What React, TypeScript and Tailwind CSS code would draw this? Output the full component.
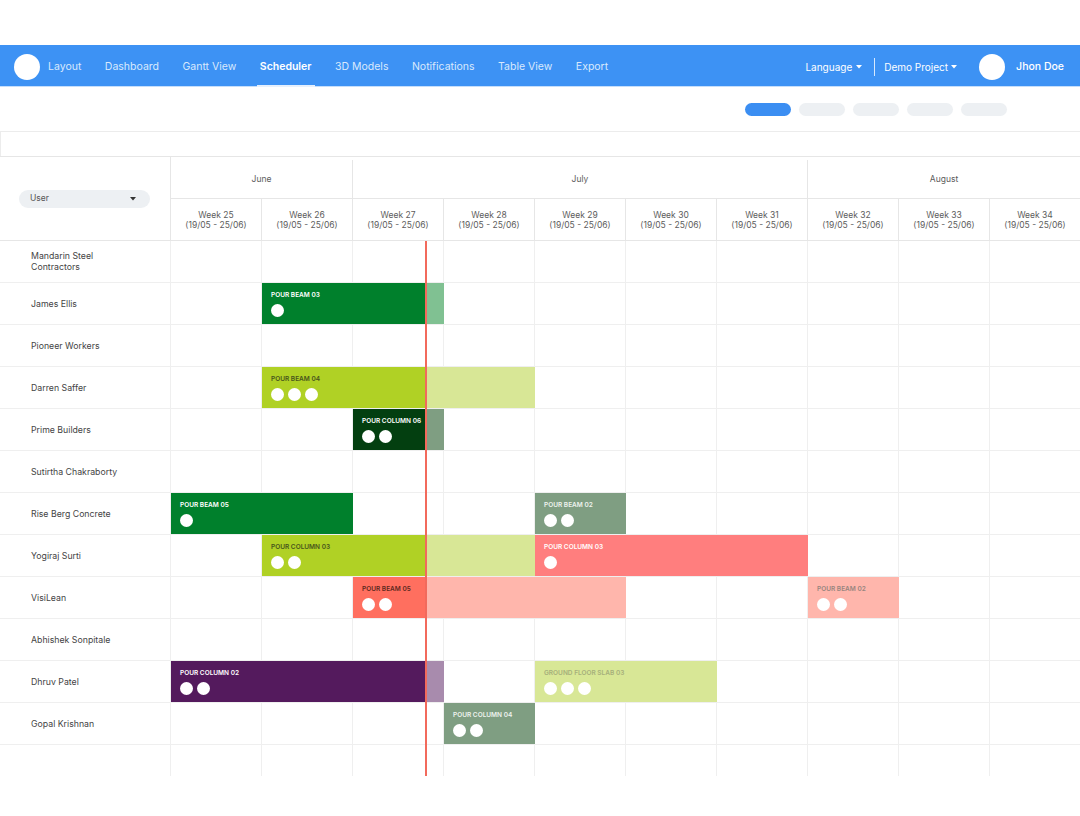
import React from "react";

const WEEK = 91;
const TODAY = 2.8;

type Seg = {
  s: number;
  e: number;
  bg: string;
  label?: string;
  fg?: string;
  dots?: number;
};

type Row = { name: string; segs: Seg[] };

const LIME = "bg-[#b0d125]";
const LIME_LIGHT = "bg-[#d8e796]";
const GREEN = "bg-[#00802c]";
const SAGE = "bg-[#7f9e82]";
const PINK_LIGHT = "bg-[#ffb6ac]";

const rows: Row[] = [
  { name: "Mandarin Steel\nContractors", segs: [] },
  {
    name: "James Ellis",
    segs: [
      { s: 1, e: TODAY, bg: GREEN, label: "POUR BEAM 03", fg: "text-white", dots: 1 },
      { s: TODAY, e: 3, bg: "bg-[#80c192]" },
    ],
  },
  { name: "Pioneer Workers", segs: [] },
  {
    name: "Darren Saffer",
    segs: [
      { s: 1, e: TODAY, bg: LIME, label: "POUR BEAM 04", fg: "text-[#48551c]", dots: 3 },
      { s: TODAY, e: 4, bg: LIME_LIGHT },
    ],
  },
  {
    name: "Prime Builders",
    segs: [
      { s: 2, e: TODAY, bg: "bg-[#033f10]", label: "POUR COLUMN 06", fg: "text-white", dots: 2 },
      { s: TODAY, e: 3, bg: SAGE },
    ],
  },
  { name: "Sutirtha Chakraborty", segs: [] },
  {
    name: "Rise Berg Concrete",
    segs: [
      { s: 0, e: 2, bg: GREEN, label: "POUR BEAM 05", fg: "text-white", dots: 1 },
      { s: 4, e: 5, bg: SAGE, label: "POUR BEAM 02", fg: "text-[#eef3ee]", dots: 2 },
    ],
  },
  {
    name: "Yogiraj Surti",
    segs: [
      { s: 1, e: TODAY, bg: LIME, label: "POUR COLUMN 03", fg: "text-[#48551c]", dots: 2 },
      { s: TODAY, e: 4, bg: LIME_LIGHT },
      { s: 4, e: 7, bg: "bg-[#ff7e7e]", label: "POUR COLUMN 03", fg: "text-white", dots: 1 },
    ],
  },
  {
    name: "VisiLean",
    segs: [
      { s: 2, e: TODAY, bg: "bg-[#ff6f5f]", label: "POUR BEAM 05", fg: "text-[#5e2820]", dots: 2 },
      { s: TODAY, e: 5, bg: PINK_LIGHT },
      { s: 7, e: 8, bg: PINK_LIGHT, label: "POUR BEAM 02", fg: "text-[#98857f]", dots: 2 },
    ],
  },
  { name: "Abhishek Sonpitale", segs: [] },
  {
    name: "Dhruv Patel",
    segs: [
      { s: 0, e: TODAY, bg: "bg-[#541a5d]", label: "POUR COLUMN 02", fg: "text-white", dots: 2 },
      { s: TODAY, e: 3, bg: "bg-[#a88bad]" },
      { s: 4, e: 6, bg: LIME_LIGHT, label: "GROUND FLOOR SLAB 03", fg: "text-[#a6af7b]", dots: 3 },
    ],
  },
  {
    name: "Gopal Krishnan",
    segs: [{ s: 3, e: 4, bg: SAGE, label: "POUR COLUMN 04", fg: "text-[#eef3ee]", dots: 2 }],
  },
];

const weeks = [25, 26, 27, 28, 29, 30, 31, 32, 33, 34];
const navItems = ["Layout", "Dashboard", "Gantt View", "Scheduler", "3D Models", "Notifications", "Table View", "Export"];

function Caret({ className = "" }: { className?: string }) {
  return (
    <svg width="6" height="4" viewBox="0 0 6 4" className={className}>
      <path d="M0 0h6L3 3.5z" fill="currentColor" />
    </svg>
  );
}

function WeekCells() {
  return (
    <>
      {weeks.map((w, i) => (
        <div
          key={w}
          className={`h-full shrink-0 ${i === weeks.length - 1 ? "flex-1" : "w-[91px] border-r border-[#efefef]"}`}
        />
      ))}
    </>
  );
}

function Bar({ seg }: { seg: Seg }) {
  return (
    <div
      className={`absolute top-0 bottom-0 overflow-hidden ${seg.bg}`}
      style={{ left: seg.s * WEEK, width: (seg.e - seg.s) * WEEK }}
    >
      {seg.label && (
        <div className="pl-[9px] pt-[8px]">
          <div className={`whitespace-nowrap text-[6.5px] font-semibold leading-[8px] ${seg.fg}`}>{seg.label}</div>
          <div className="mt-[5px] flex gap-[4px]">
            {Array.from({ length: seg.dots ?? 0 }).map((_, i) => (
              <span key={i} className="h-[13px] w-[13px] rounded-full bg-white" />
            ))}
          </div>
        </div>
      )}
    </div>
  );
}

export default function App() {
  return (
    <div className="min-h-[816px] bg-white font-['Inter','Liberation_Sans',sans-serif]">
      <div className="h-[45px]" />

      {/* top nav */}
      <nav className="flex h-[42px] items-center border-b border-[#c5defb] bg-[#3d92f4] pl-[14px] pr-[16px] pt-[3px] text-[10.5px]">
        <span className="h-[26px] w-[26px] rounded-full bg-white" />
        <div className="ml-[5px] flex h-full items-stretch gap-[17.5px]">
          {navItems.map((item) => {
            const active = item === "Scheduler";
            return (
              <div
                key={item}
                className={`relative flex items-center px-[3px] ${active ? "font-semibold text-white" : "text-[#d9e9fd]"}`}
              >
                {item}
                {active && <span className="absolute bottom-[-1px] left-0 right-0 h-[2px] bg-[#e6f0fd]" />}
              </div>
            );
          })}
        </div>
        <div className="ml-auto flex items-center text-[10px] text-white">
          <span className="flex items-center gap-[4px]">
            Language <Caret />
          </span>
          <span className="ml-[12px] mr-[9px] h-[18px] w-px bg-white/80" />
          <span className="flex items-center gap-[3px]">
            Demo Project <Caret />
          </span>
          <span className="ml-[22px] h-[26px] w-[26px] rounded-full bg-white" />
          <span className="ml-[11px] text-[10.5px] font-medium">Jhon Doe</span>
        </div>
      </nav>

      {/* pills */}
      <div className="flex h-[44px] items-center justify-end gap-[8px] pr-[73px]">
        <span className="h-[13px] w-[46px] rounded-full bg-[#3b8ef2]" />
        <span className="h-[13px] w-[46px] rounded-full bg-[#edf0f3]" />
        <span className="h-[13px] w-[46px] rounded-full bg-[#edf0f3]" />
        <span className="h-[13px] w-[46px] rounded-full bg-[#edf0f3]" />
        <span className="h-[13px] w-[46px] rounded-full bg-[#edf0f3]" />
      </div>

      <div className="h-[25px] border-l border-t border-[#ececec]" />

      {/* header */}
      <div className="flex border-t border-[#e6e6e6] text-[8.5px] text-[#5c5c5c]">
        <div className="flex h-[84px] w-[171px] shrink-0 items-center border-b border-r border-[#e6e6e6] pl-[19px]">
          <div className="flex h-[18px] w-[131px] items-center justify-between rounded-full bg-[#edf0f3] pl-[11px] pr-[14px] text-[#555]">
            User <Caret className="text-[#333]" />
          </div>
        </div>
        <div className="flex flex-1 flex-col">
          <div className="flex h-[42px] border-b border-[#e6e6e6] pt-[3px]">
            <div className="flex w-[182px] items-center justify-center border-r border-[#e6e6e6]">June</div>
            <div className="flex w-[455px] items-center justify-center border-r border-[#e6e6e6]">July</div>
            <div className="flex flex-1 items-center justify-center">August</div>
          </div>
          <div className="flex h-[42px] border-b border-[#e6e6e6]">
            {weeks.map((w, i) => (
              <div
                key={w}
                className={`flex flex-col items-center justify-center leading-[10px] ${i === weeks.length - 1 ? "flex-1" : "w-[91px] border-r border-[#e6e6e6]"}`}
              >
                <span>Week {w}</span>
                <span>(19/05 - 25/06)</span>
              </div>
            ))}
          </div>
        </div>
      </div>

      {/* body */}
      <div className="relative">
        {rows.map((row) => (
          <div key={row.name} className="flex h-[42px] border-b border-[#efefef]">
            <div className="flex w-[171px] shrink-0 items-center whitespace-pre-line border-r border-[#efefef] pl-[31px] pt-[1px] text-[8.75px] leading-[11px] text-[#444]">
              {row.name}
            </div>
            <div className="relative flex flex-1">
              <WeekCells />
              {row.segs.map((seg, i) => (
                <Bar key={i} seg={seg} />
              ))}
            </div>
          </div>
        ))}
        <div className="flex h-[31px]">
          <div className="w-[171px] shrink-0 border-r border-[#efefef]" />
          <div className="flex flex-1">
            <WeekCells />
          </div>
        </div>
        <div className="absolute bottom-0 top-0 left-[425px] w-[1.5px] bg-[#f26a5c]" />
      </div>
    </div>
  );
}
